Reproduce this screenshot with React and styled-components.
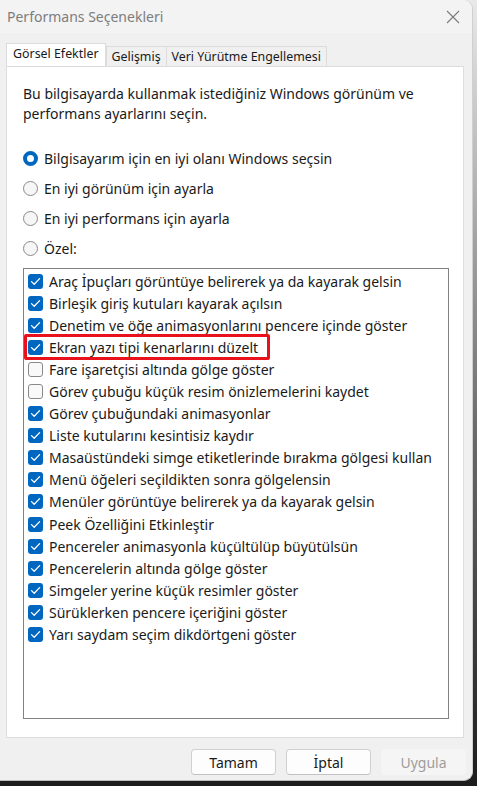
import React from "react";
import styled, { createGlobalStyle } from "styled-components";

const Global = createGlobalStyle`
  html, body { margin: 0; padding: 0; }
  body {
    width: 477px; height: 786px; overflow: hidden;
    background: linear-gradient(180deg, #e9e9e9 0%, #6a6a6a 55%, #1c1c1c 100%);
    font-family: "Noto Sans", "Open Sans", sans-serif;
  }
`;

const Window = styled.div`
  width: 473px;
  height: 781px;
  background: #f0f0f0;
  border-right: 1px solid #cfcfcf;
  border-bottom: 1px solid #bdbdbd;
  border-radius: 0 9px 9px 0;
  display: flex;
  flex-direction: column;
  color: #1a1a1a;
  box-sizing: border-box;
`;

const TitleBar = styled.div`
  height: 33px;
  display: flex;
  align-items: center;
  justify-content: space-between;
  padding: 0 12px 0 7px;
  background: #f3f3f3;
  border-radius: 0 9px 0 0;
`;

const Title = styled.span`
  font-size: 14px;
  color: #7d7d7d;
`;

const Close = styled.svg`
  width: 14px;
  height: 14px;
`;

const TabStrip = styled.div`
  display: flex;
  align-items: flex-end;
  height: 33px;
  padding-left: 6px;
  box-sizing: border-box;
`;

const Tab = styled.div`
  height: ${(p) => (p.$active ? "23px" : "20px")};
  padding: 0 ${(p) => (p.$active ? "6px" : "5px")};
  display: flex;
  align-items: center;
  font-size: 12.4px;
  background: ${(p) => (p.$active ? "#ffffff" : "#f0f0f0")};
  border: 1px solid #dcdcdc;
  border-bottom: none;
  margin-right: ${(p) => (p.$active ? "0" : "-1px")};
  box-sizing: border-box;
  position: relative;
  z-index: ${(p) => (p.$active ? 1 : 0)};
  padding-bottom: ${(p) => (p.$active ? "3px" : "0")};
`;

const Panel = styled.div`
  margin: 0 8px 0 6px;
  height: 672px;
  background: #ffffff;
  border: 1px solid #dedede;
  border-top-color: #dcdcdc;
  box-sizing: border-box;
  padding: 17px 14px 0 16px;
  display: flex;
  flex-direction: column;
`;

const Description = styled.p`
  margin: 0;
  font-size: 14px;
  line-height: 20px;
`;

const RadioGroup = styled.div`
  margin-top: 19px;
  display: flex;
  flex-direction: column;
`;

const RadioRow = styled.label`
  height: 30px;
  display: flex;
  align-items: center;
  gap: 6px;
  font-size: 14px;
`;

const RadioDot = styled.span`
  width: 15px;
  height: 15px;
  border-radius: 50%;
  box-sizing: border-box;
  flex: none;
  background: ${(p) => (p.$on ? "#ffffff" : "#f6f6f6")};
  border: ${(p) => (p.$on ? "4.5px solid #0067c0" : "1px solid #8a8a8a")};
`;

const ListBox = styled.div`
  margin-top: 5px;
  height: 451px;
  border: 1px solid #828282;
  box-sizing: border-box;
  padding: 1px 0 0 4px;
  display: flex;
  flex-direction: column;
`;

const ItemRow = styled.div`
  position: relative;
  height: 22.1px;
  display: flex;
  align-items: center;
  gap: 6px;
  font-size: 14px;
  white-space: nowrap;
`;

const Box = styled.span`
  width: 15px;
  height: 15px;
  border-radius: 3px;
  box-sizing: border-box;
  flex: none;
  display: flex;
  align-items: center;
  justify-content: center;
  background: ${(p) => (p.$on ? "#0067c0" : "#f9f9f9")};
  border: ${(p) => (p.$on ? "none" : "1px solid #8a8a8a")};
`;

const Highlight = styled.span`
  position: absolute;
  left: -4px;
  top: -2px;
  width: 246px;
  height: 26px;
  border: 3px solid #e8111c;
  border-radius: 2px;
  box-sizing: border-box;
  pointer-events: none;
`;

const Footer = styled.div`
  flex: 1;
  display: flex;
  justify-content: flex-end;
  align-items: flex-start;
  gap: 10px;
  padding: 11px 6px 0 0;
`;

const Button = styled.button`
  width: 85px;
  height: 26px;
  font-family: inherit;
  font-size: 14px;
  border-radius: 4px;
  box-sizing: border-box;
  color: ${(p) => (p.disabled ? "#9d9d9d" : "#1a1a1a")};
  background: ${(p) => (p.disabled ? "#f5f5f5" : "#fdfdfd")};
  border: 1px solid ${(p) => (p.disabled ? "#f5f5f5" : "#d0d0d0")};
  border-bottom-color: ${(p) => (p.disabled ? "#f5f5f5" : "#c2c2c2")};
  padding: 0;
`;

const Check = () => (
  <svg width="11" height="9" viewBox="0 0 11 9">
    <path d="M1.5 4.6 L4.2 7.2 L9.6 1.6" fill="none" stroke="#fff" strokeWidth="1.3" strokeLinecap="round" strokeLinejoin="round" />
  </svg>
);

const items = [
  ["Araç İpuçları görüntüye belirerek ya da kayarak gelsin", true],
  ["Birleşik giriş kutuları kayarak açılsın", true],
  ["Denetim ve öğe animasyonlarını pencere içinde göster", true],
  ["Ekran yazı tipi kenarlarını düzelt", true, true],
  ["Fare işaretçisi altında gölge göster", false],
  ["Görev çubuğu küçük resim önizlemelerini kaydet", false],
  ["Görev çubuğundaki animasyonlar", true],
  ["Liste kutularını kesintisiz kaydır", true],
  ["Masaüstündeki simge etiketlerinde bırakma gölgesi kullan", true],
  ["Menü öğeleri seçildikten sonra gölgelensin", true],
  ["Menüler görüntüye belirerek ya da kayarak gelsin", true],
  ["Peek Özelliğini Etkinleştir", true],
  ["Pencereler animasyonla küçültülüp büyütülsün", true],
  ["Pencerelerin altında gölge göster", true],
  ["Simgeler yerine küçük resimler göster", true],
  ["Sürüklerken pencere içeriğini göster", true],
  ["Yarı saydam seçim dikdörtgeni göster", true],
];

const radios = [
  ["Bilgisayarım için en iyi olanı Windows seçsin", true],
  ["En iyi görünüm için ayarla", false],
  ["En iyi performans için ayarla", false],
  ["Özel:", false],
];

export default function App() {
  return (
    <>
      <Global />
      <Window>
        <TitleBar>
          <Title>Performans Seçenekleri</Title>
          <Close viewBox="0 0 14 14">
            <path d="M1 1 L13 13 M13 1 L1 13" stroke="#7a7a7a" strokeWidth="1.1" />
          </Close>
        </TitleBar>
        <TabStrip>
          <Tab $active>Görsel Efektler</Tab>
          <Tab>Gelişmiş</Tab>
          <Tab>Veri Yürütme Engellemesi</Tab>
        </TabStrip>
        <Panel>
          <Description>
            Bu bilgisayarda kullanmak istediğiniz Windows görünüm ve
            <br />
            performans ayarlarını seçin.
          </Description>
          <RadioGroup>
            {radios.map(([t, on]) => (
              <RadioRow key={t}>
                <RadioDot $on={on} />
                {t}
              </RadioRow>
            ))}
          </RadioGroup>
          <ListBox>
            {items.map(([t, on, hl]) => (
              <ItemRow key={t}>
                <Box $on={on}>{on && <Check />}</Box>
                {t}
                {hl && <Highlight />}
              </ItemRow>
            ))}
          </ListBox>
        </Panel>
        <Footer>
          <Button>Tamam</Button>
          <Button>İptal</Button>
          <Button disabled>Uygula</Button>
        </Footer>
      </Window>
    </>
  );
}
